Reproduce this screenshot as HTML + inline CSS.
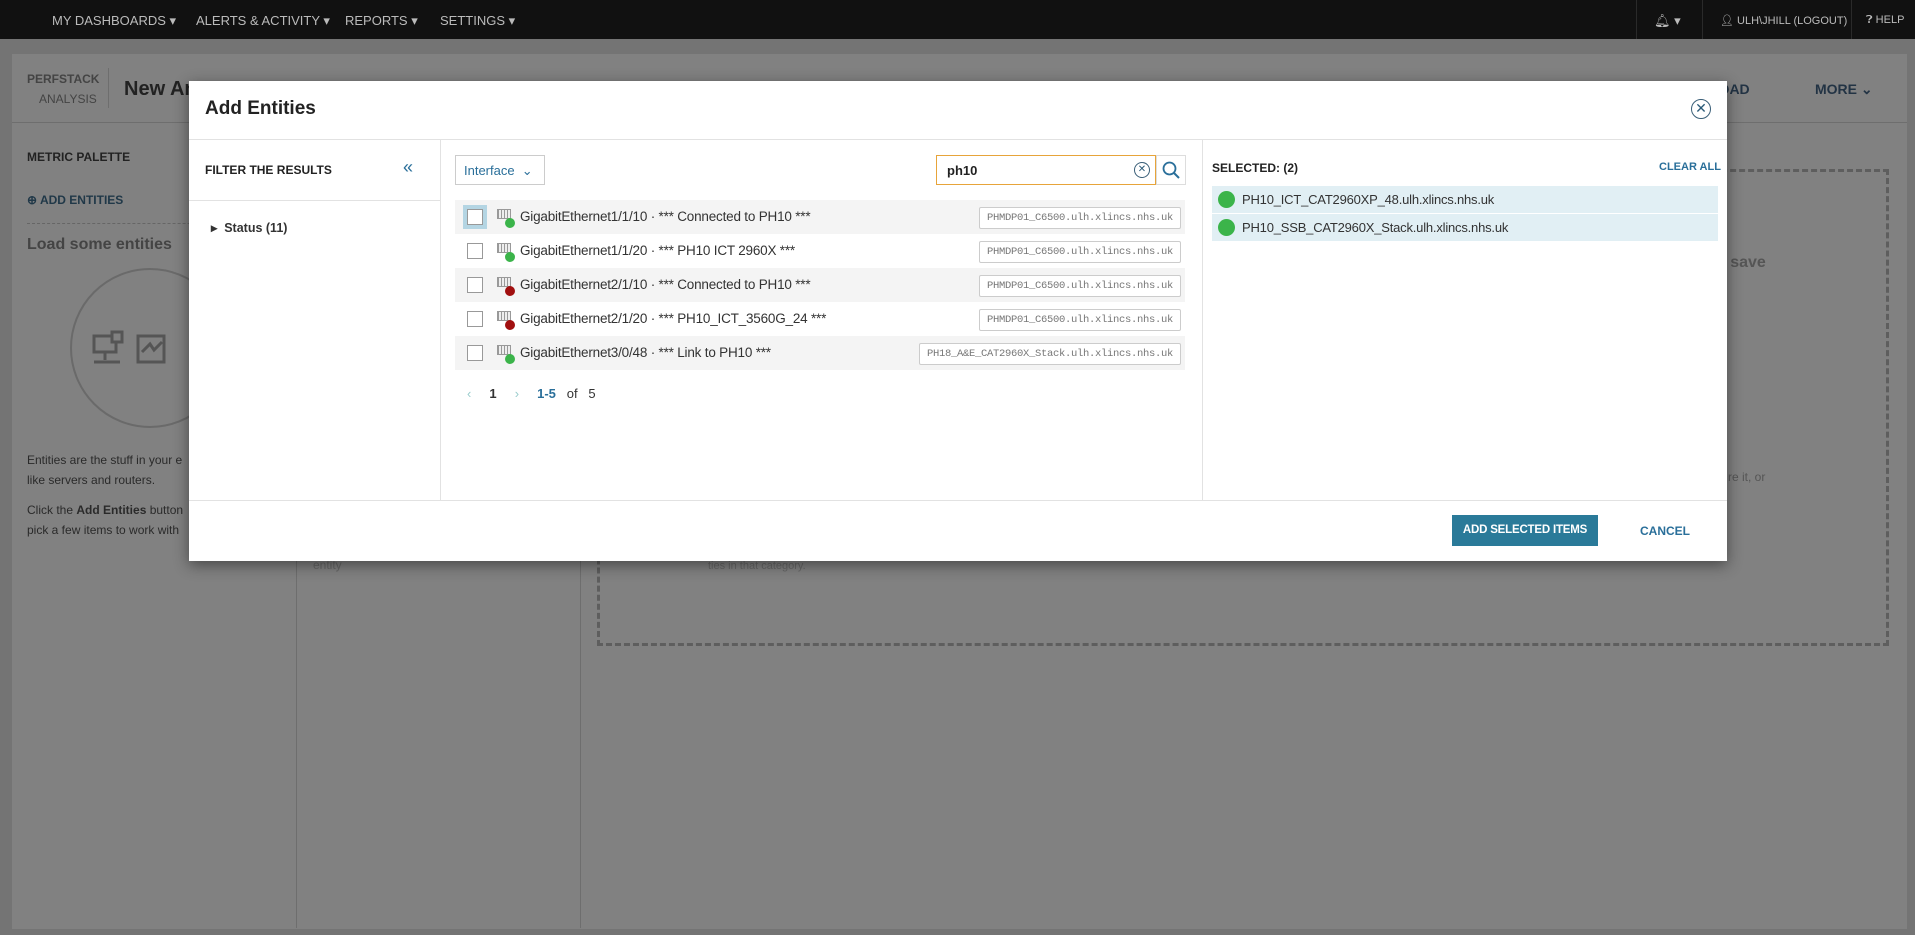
<!DOCTYPE html>
<html><head><meta charset="utf-8">
<style>
*{box-sizing:border-box;margin:0;padding:0}
body{width:1915px;height:935px;overflow:hidden;background:#747474;font-family:"Liberation Sans",sans-serif;position:relative}
.a{position:absolute}
.nav{left:0;top:0;width:1915px;height:39px;background:#111;color:#bbb;font-size:13px}
.nav span{position:absolute;top:13px;white-space:nowrap}
.bg{left:12px;top:54px;width:1895px;height:875px;background:#818181}
.g{color:#444}
.modal{left:189px;top:81px;width:1538px;height:480px;background:#fff;box-shadow:0 4px 14px rgba(0,0,0,.45)}
.row{left:266px;width:730px;height:34px}
.row.s{background:#f4f4f4}
.cb{position:absolute;left:12px;top:9px;width:16px;height:16px;border:1.5px solid #999;background:#fff}
.rt{position:absolute;left:65px;top:9px;font-size:13.5px;color:#333;white-space:nowrap;letter-spacing:-.2px}
.tag{position:absolute;right:4px;top:7px;height:22px;border:1px solid #ccc;border-radius:2px;font-family:"Liberation Mono",monospace;font-size:10.5px;color:#777;padding:4px 7px;white-space:nowrap;background:#fff;letter-spacing:-.3px}
.ic{position:absolute;left:42px;top:9px;width:14px;height:10px;border:1px solid #999;background:repeating-linear-gradient(90deg,#999 0 1px,#eee 1px 3px)}
.dot{position:absolute;left:50px;top:18px;width:10px;height:10px;border-radius:50%}
.sel{left:1023px;width:506px;height:27px;background:#e1eff4}
.sel i{position:absolute;left:6px;top:5px;width:17px;height:17px;border-radius:50%;background:#3bb44a}
.sel span{position:absolute;left:30px;top:6px;font-size:13px;color:#333;white-space:nowrap;letter-spacing:-.2px}
</style></head><body>
<div class="a nav">
<span style="left:52px">MY DASHBOARDS ▾</span>
<span style="left:196px">ALERTS &amp; ACTIVITY ▾</span>
<span style="left:345px">REPORTS ▾</span>
<span style="left:440px">SETTINGS ▾</span>
<div class="a" style="left:1636px;top:0;width:1px;height:39px;background:#2a2a2a"></div>
<span style="left:1654px">🔔︎ ▾</span>
<div class="a" style="left:1702px;top:0;width:1px;height:39px;background:#2a2a2a"></div>
<span style="left:1720px;font-size:11px;top:14px">👤︎ ULH\JHILL (LOGOUT)</span>
<div class="a" style="left:1851px;top:0;width:1px;height:39px;background:#2a2a2a"></div>
<span style="left:1866px;font-size:11px;top:14px">❓︎ HELP</span>
</div>
<div class="a bg"></div>
<div class="a" style="left:12px;top:122px;width:1895px;height:1px;background:#6e6e6e"></div>
<div class="a" style="left:108px;top:68px;width:1px;height:40px;background:#6e6e6e"></div>
<div class="a" style="left:296px;top:122px;width:1px;height:806px;background:#6e6e6e"></div>
<div class="a" style="left:580px;top:122px;width:1px;height:806px;background:#6e6e6e"></div>
<div class="a" style="left:597px;top:169px;width:1292px;height:477px;border:3px dashed #5e5e5e"></div>
<div class="a g" style="left:27px;top:72px;font-size:12px;font-weight:bold">PERFSTACK</div>
<div class="a g" style="left:39px;top:92px;font-size:12px">ANALYSIS</div>
<div class="a" style="left:124px;top:78px;font-size:20px;font-weight:bold;color:#222">New An</div>
<div class="a" style="left:1710px;top:81px;font-size:14px;font-weight:bold;color:#234">LOAD</div>
<div class="a" style="left:1815px;top:81px;font-size:14px;font-weight:bold;color:#234">MORE ⌄</div>
<div class="a g" style="left:27px;top:150px;font-size:12px;font-weight:bold;color:#222">METRIC PALETTE</div>
<div class="a" style="left:27px;top:193px;font-size:12px;font-weight:bold;color:#203848">⊕ ADD ENTITIES</div>
<div class="a" style="left:27px;top:223px;width:269px;border-top:1px dashed #666"></div>
<div class="a" style="left:27px;top:236px;font-size:16px;font-weight:bold;color:#444">Load some entities</div>
<div class="a" style="left:70px;top:268px;width:160px;height:160px;border-radius:50%;border:2px solid #6a6a6a"></div>
<svg class="a" style="left:92px;top:330px" width="100" height="40" fill="none" stroke="#555" stroke-width="3"><rect x="2" y="6" width="22" height="16"/><rect x="20" y="2" width="10" height="10" fill="#818181"/><path d="M13 22v8M2 32h26"/><rect x="46" y="6" width="26" height="26"/><path d="M50 22l8-8 4 6 8-8"/></svg>
<div class="a" style="left:27px;top:450px;font-size:12px;line-height:20px;color:#2a2a2a">Entities are the stuff in your e<br>like servers and routers.</div>
<div class="a" style="left:27px;top:500px;font-size:12px;line-height:20px;color:#2a2a2a">Click the <b>Add Entities</b> button<br>pick a few items to work with</div>
<div class="a" style="left:1716px;top:254px;font-size:16px;font-weight:bold;color:#555">d save</div>
<div class="a" style="left:1728px;top:470px;font-size:12px;color:#555">re it, or</div>
<div class="a" style="left:313px;top:558px;font-size:12px;color:#666">entity</div>
<div class="a" style="left:708px;top:560px;font-size:11px;color:#666">ties in that category.</div>

<div class="a modal">
<div class="a" style="left:16px;top:17px;font-size:19px;font-weight:bold;color:#222">Add Entities</div>
<div class="a" style="left:1502px;top:18px;width:20px;height:20px;border:1.5px solid #3a5f78;border-radius:50%;color:#2a5a78;font-size:14px;text-align:center;line-height:17px">✕</div>
<div class="a" style="left:0;top:58px;width:1538px;height:1px;background:#e2e2e2"></div>
<div class="a" style="left:251px;top:58px;width:1px;height:361px;background:#e2e2e2"></div>
<div class="a" style="left:1013px;top:58px;width:1px;height:361px;background:#e2e2e2"></div>
<div class="a" style="left:0;top:419px;width:1538px;height:1px;background:#e2e2e2"></div>
<div class="a" style="left:16px;top:82px;font-size:12px;font-weight:bold;color:#222">FILTER THE RESULTS</div>
<div class="a" style="left:214px;top:76px;font-size:18px;color:#2a6f9a">«</div>
<div class="a" style="left:0;top:119px;width:251px;height:1px;background:#e2e2e2"></div>
<div class="a" style="left:22px;top:139px;font-size:12.5px;font-weight:bold;color:#333">▸&nbsp;&nbsp;Status (11)</div>
<div class="a" style="left:266px;top:74px;width:90px;height:30px;border:1px solid #ccc;font-size:13px;color:#2a6f9a;padding:7px 8px">Interface&nbsp;&nbsp;⌄</div>
<div class="a" style="left:747px;top:74px;width:220px;height:30px;border:1px solid #e7a43a;font-size:13px;font-weight:bold;color:#222;padding:7px 10px">ph10</div>
<div class="a" style="left:945px;top:81px;width:16px;height:16px;border:1.2px solid #3a5f78;border-radius:50%;font-size:10px;color:#2a5a78;text-align:center;line-height:14px">✕</div>
<div class="a" style="left:967px;top:74px;width:30px;height:30px;border:1px solid #ddd"></div>
<svg class="a" style="left:973px;top:80px" width="18" height="18"><circle cx="7.5" cy="7.5" r="6" fill="none" stroke="#2a6f9a" stroke-width="1.8"/><path d="M12 12l5 5" stroke="#2a6f9a" stroke-width="2"/></svg>

<div class="a row s" style="top:119px"><div class="cb" style="outline:4px solid #b4d5e3"></div><div class="ic"></div><div class="dot" style="background:#3bb44a"></div><div class="rt">GigabitEthernet1/1/10 · *** Connected to PH10 ***</div><div class="tag">PHMDP01_C6500.ulh.xlincs.nhs.uk</div></div>
<div class="a row" style="top:153px"><div class="cb"></div><div class="ic"></div><div class="dot" style="background:#3bb44a"></div><div class="rt">GigabitEthernet1/1/20 · *** PH10 ICT 2960X ***</div><div class="tag">PHMDP01_C6500.ulh.xlincs.nhs.uk</div></div>
<div class="a row s" style="top:187px"><div class="cb"></div><div class="ic"></div><div class="dot" style="background:#a10f0f"></div><div class="rt">GigabitEthernet2/1/10 · *** Connected to PH10 ***</div><div class="tag">PHMDP01_C6500.ulh.xlincs.nhs.uk</div></div>
<div class="a row" style="top:221px"><div class="cb"></div><div class="ic"></div><div class="dot" style="background:#a10f0f"></div><div class="rt">GigabitEthernet2/1/20 · *** PH10_ICT_3560G_24 ***</div><div class="tag">PHMDP01_C6500.ulh.xlincs.nhs.uk</div></div>
<div class="a row s" style="top:255px"><div class="cb"></div><div class="ic"></div><div class="dot" style="background:#3bb44a"></div><div class="rt">GigabitEthernet3/0/48 · *** Link to PH10 ***</div><div class="tag">PH18_A&amp;E_CAT2960X_Stack.ulh.xlincs.nhs.uk</div></div>

<div class="a" style="left:278px;top:305px;font-size:13px;color:#333;white-space:nowrap"><span style="color:#9cc">‹</span>&nbsp;&nbsp;&nbsp;&nbsp;&nbsp;<b>1</b>&nbsp;&nbsp;&nbsp;&nbsp;&nbsp;<span style="color:#9cc">›</span>&nbsp;&nbsp;&nbsp;&nbsp;&nbsp;<b style="color:#2a6f9a">1-5</b>&nbsp;&nbsp;&nbsp;of&nbsp;&nbsp;&nbsp;5</div>

<div class="a" style="left:1023px;top:80px;font-size:12px;font-weight:bold;color:#222">SELECTED: (2)</div>
<div class="a" style="left:1470px;top:80px;font-size:11px;font-weight:bold;color:#2a6f9a">CLEAR ALL</div>
<div class="a sel" style="top:105px"><i></i><span>PH10_ICT_CAT2960XP_48.ulh.xlincs.nhs.uk</span></div>
<div class="a sel" style="top:133px"><i></i><span>PH10_SSB_CAT2960X_Stack.ulh.xlincs.nhs.uk</span></div>

<div class="a" style="left:1263px;top:434px;width:146px;height:31px;background:#2a7a99;color:#fff;font-size:11.5px;font-weight:bold;text-align:center;line-height:31px;letter-spacing:-.2px">ADD SELECTED ITEMS</div>
<div class="a" style="left:1451px;top:443px;font-size:12px;font-weight:bold;color:#2a6f9a">CANCEL</div>
</div>
</body></html>
